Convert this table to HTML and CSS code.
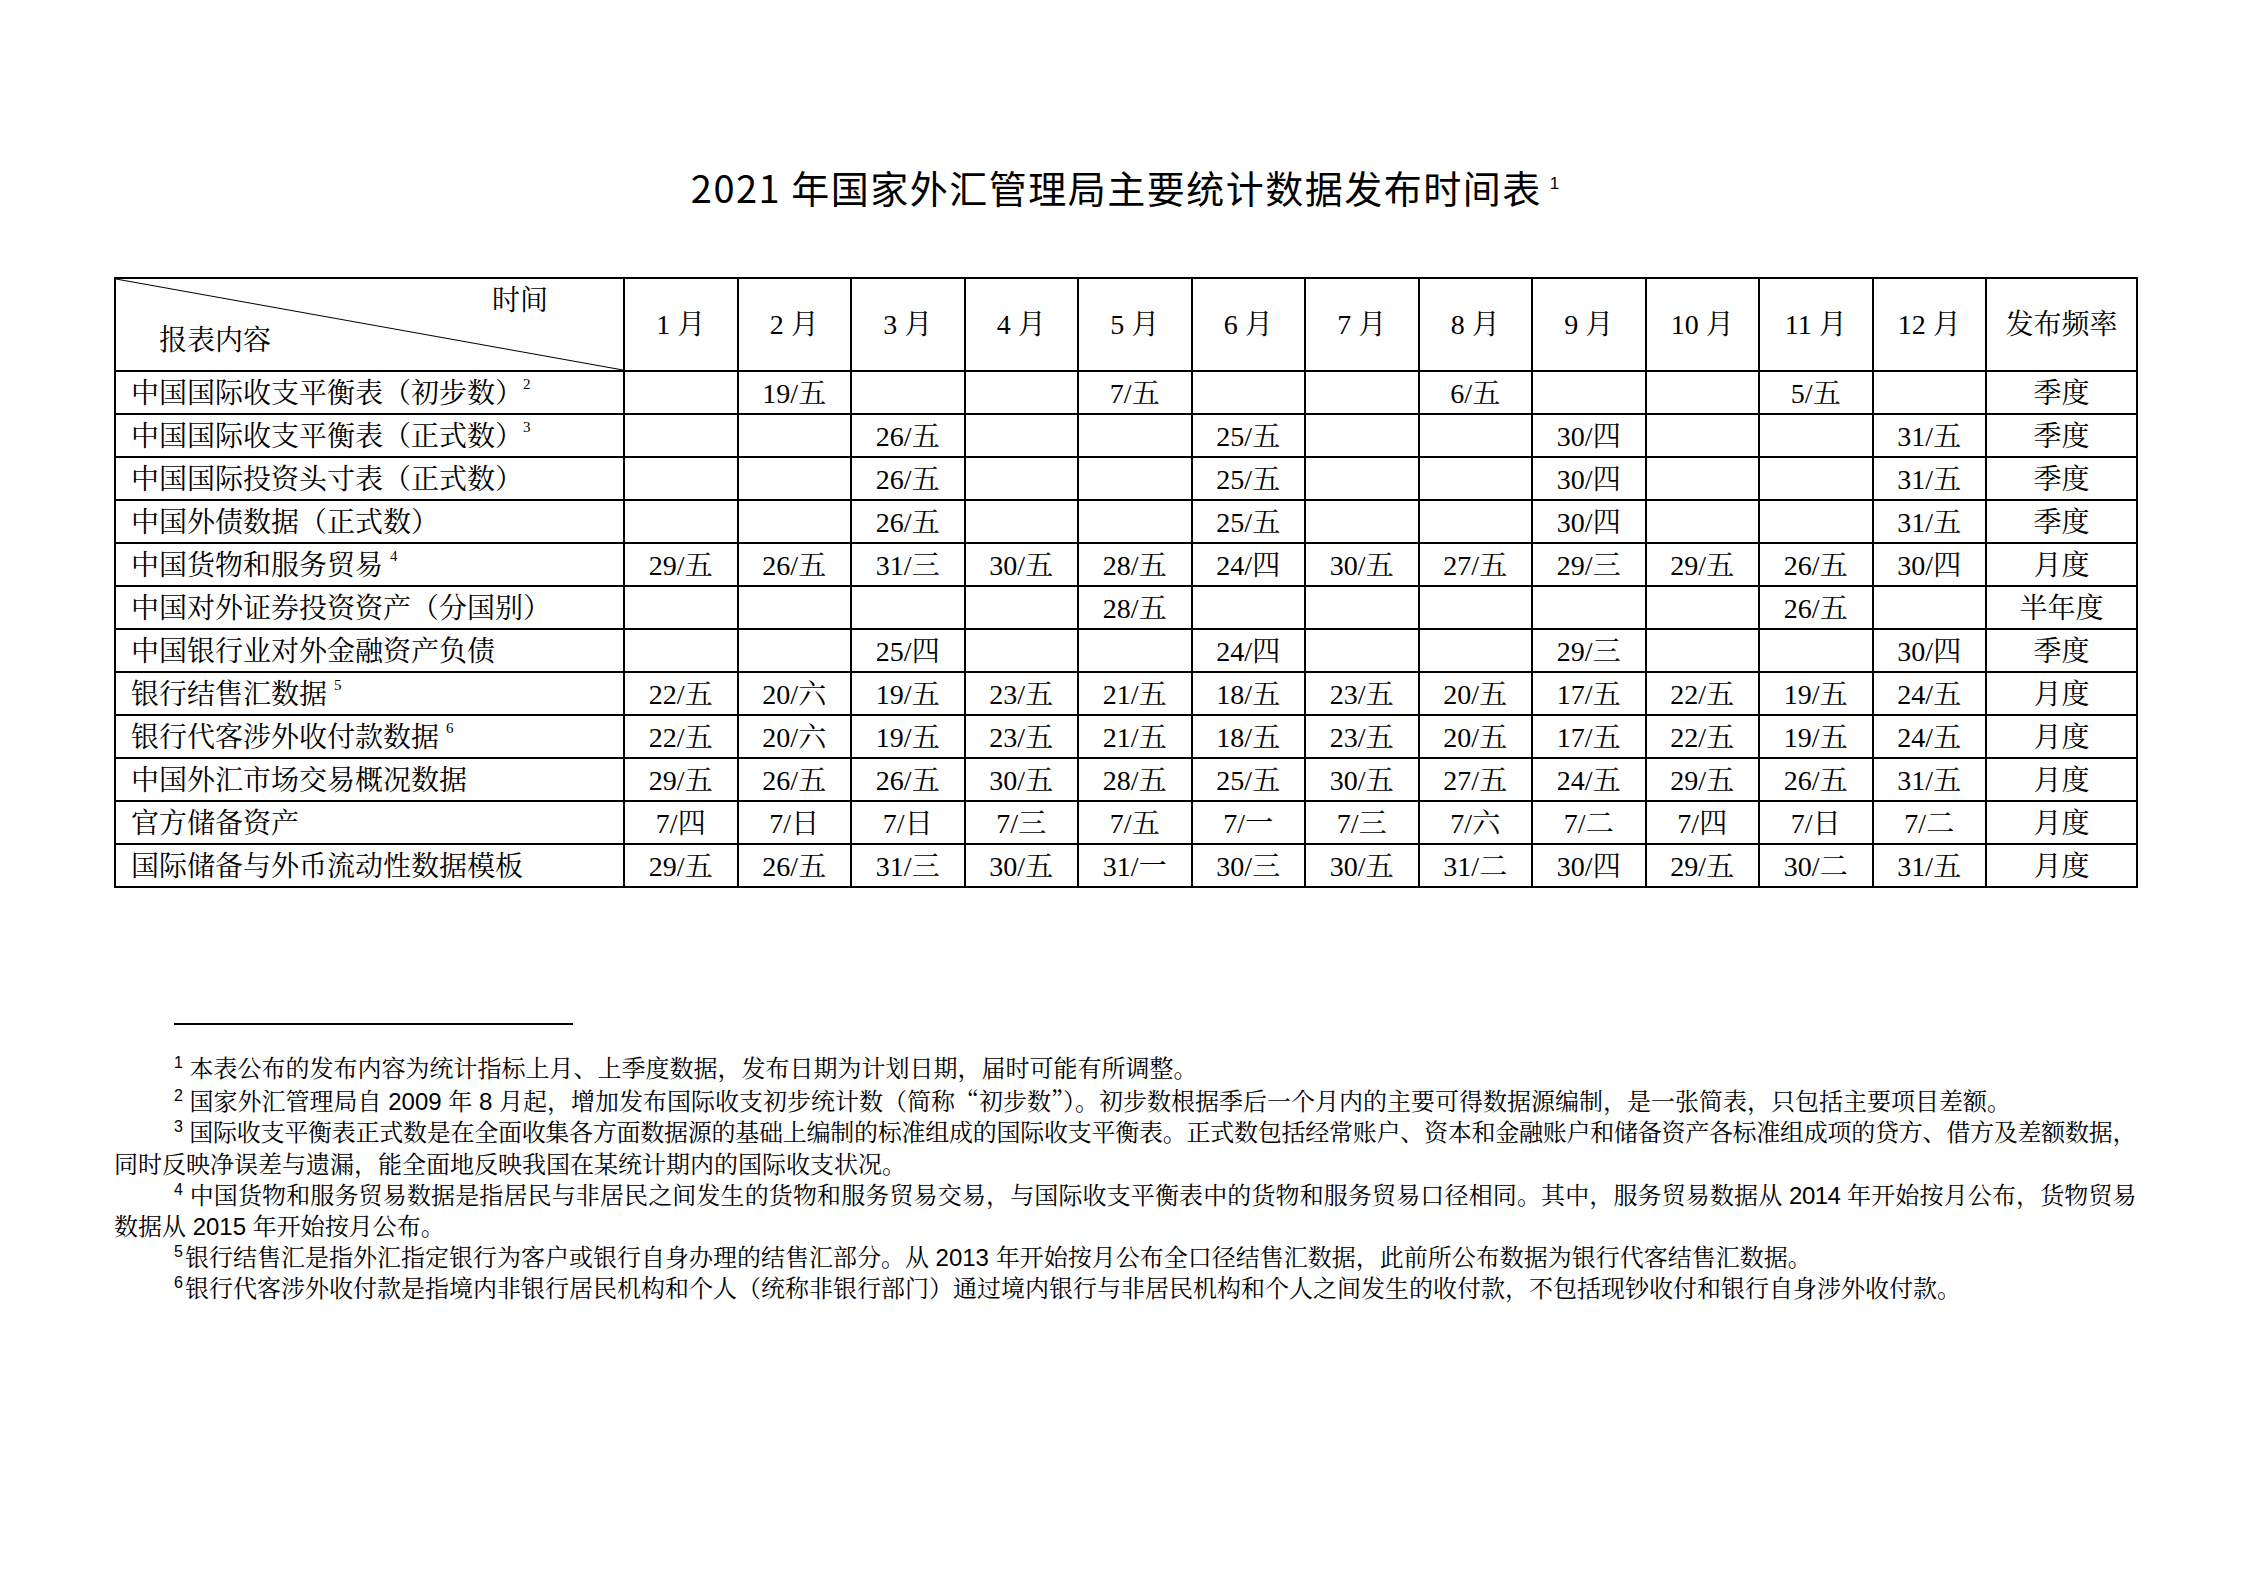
FILE: index.html
```html
<!DOCTYPE html>
<html lang="zh-CN">
<head>
<meta charset="utf-8">
<title>2021 年国家外汇管理局主要统计数据发布时间表</title>
<link rel="stylesheet" href="styles.css">
</head>
<body>
<div class="page">
  <h1 class="title">2021 年国家外汇管理局主要统计数据发布时间表<sup class="title-note">1</sup></h1>

  <table class="schedule">
    <colgroup>
      <col class="c-label">
      <col class="c-month"><col class="c-month"><col class="c-month"><col class="c-month">
      <col class="c-month"><col class="c-month"><col class="c-month"><col class="c-month">
      <col class="c-month"><col class="c-month"><col class="c-month"><col class="c-month">
      <col class="c-freq">
    </colgroup>
    <thead>
      <tr>
        <th class="corner">
          <div class="corner-box">
            <span class="corner-time">时间</span>
            <span class="corner-content">报表内容</span>
          </div>
        </th>
        <th>1 月</th><th>2 月</th><th>3 月</th><th>4 月</th><th>5 月</th><th>6 月</th>
        <th>7 月</th><th>8 月</th><th>9 月</th><th>10 月</th><th>11 月</th><th>12 月</th>
        <th>发布频率</th>
      </tr>
    </thead>
    <tbody>
      <tr>
        <td class="label">中国国际收支平衡表（初步数）<sup>2</sup></td>
        <td></td><td>19/五</td><td></td><td></td><td>7/五</td><td></td><td></td><td>6/五</td><td></td><td></td><td>5/五</td><td></td>
        <td>季度</td>
      </tr>
      <tr>
        <td class="label">中国国际收支平衡表（正式数）<sup>3</sup></td>
        <td></td><td></td><td>26/五</td><td></td><td></td><td>25/五</td><td></td><td></td><td>30/四</td><td></td><td></td><td>31/五</td>
        <td>季度</td>
      </tr>
      <tr>
        <td class="label">中国国际投资头寸表（正式数）</td>
        <td></td><td></td><td>26/五</td><td></td><td></td><td>25/五</td><td></td><td></td><td>30/四</td><td></td><td></td><td>31/五</td>
        <td>季度</td>
      </tr>
      <tr>
        <td class="label">中国外债数据（正式数）</td>
        <td></td><td></td><td>26/五</td><td></td><td></td><td>25/五</td><td></td><td></td><td>30/四</td><td></td><td></td><td>31/五</td>
        <td>季度</td>
      </tr>
      <tr>
        <td class="label">中国货物和服务贸易 <sup>4</sup></td>
        <td>29/五</td><td>26/五</td><td>31/三</td><td>30/五</td><td>28/五</td><td>24/四</td><td>30/五</td><td>27/五</td><td>29/三</td><td>29/五</td><td>26/五</td><td>30/四</td>
        <td>月度</td>
      </tr>
      <tr>
        <td class="label">中国对外证券投资资产（分国别）</td>
        <td></td><td></td><td></td><td></td><td>28/五</td><td></td><td></td><td></td><td></td><td></td><td>26/五</td><td></td>
        <td>半年度</td>
      </tr>
      <tr>
        <td class="label">中国银行业对外金融资产负债</td>
        <td></td><td></td><td>25/四</td><td></td><td></td><td>24/四</td><td></td><td></td><td>29/三</td><td></td><td></td><td>30/四</td>
        <td>季度</td>
      </tr>
      <tr>
        <td class="label">银行结售汇数据 <sup>5</sup></td>
        <td>22/五</td><td>20/六</td><td>19/五</td><td>23/五</td><td>21/五</td><td>18/五</td><td>23/五</td><td>20/五</td><td>17/五</td><td>22/五</td><td>19/五</td><td>24/五</td>
        <td>月度</td>
      </tr>
      <tr>
        <td class="label">银行代客涉外收付款数据 <sup>6</sup></td>
        <td>22/五</td><td>20/六</td><td>19/五</td><td>23/五</td><td>21/五</td><td>18/五</td><td>23/五</td><td>20/五</td><td>17/五</td><td>22/五</td><td>19/五</td><td>24/五</td>
        <td>月度</td>
      </tr>
      <tr>
        <td class="label">中国外汇市场交易概况数据</td>
        <td>29/五</td><td>26/五</td><td>26/五</td><td>30/五</td><td>28/五</td><td>25/五</td><td>30/五</td><td>27/五</td><td>24/五</td><td>29/五</td><td>26/五</td><td>31/五</td>
        <td>月度</td>
      </tr>
      <tr>
        <td class="label">官方储备资产</td>
        <td>7/四</td><td>7/日</td><td>7/日</td><td>7/三</td><td>7/五</td><td>7/一</td><td>7/三</td><td>7/六</td><td>7/二</td><td>7/四</td><td>7/日</td><td>7/二</td>
        <td>月度</td>
      </tr>
      <tr>
        <td class="label">国际储备与外币流动性数据模板</td>
        <td>29/五</td><td>26/五</td><td>31/三</td><td>30/五</td><td>31/一</td><td>30/三</td><td>30/五</td><td>31/二</td><td>30/四</td><td>29/五</td><td>30/二</td><td>31/五</td>
        <td>月度</td>
      </tr>
    </tbody>
  </table>

  <div class="notes">
    <div class="rule"></div>
    <div class="fn-line lead"><sup>1</sup> 本表公布的发布内容为统计指标上月、上季度数据，发布日期为计划日期，届时可能有所调整。</div>
    <div class="fn-line lead"><sup>2</sup> 国家外汇管理局自 2009 年 8 月起，增加发布国际收支初步统计数（简称<span class="cjk">“</span>初步数<span class="cjk">”</span>）。初步数根据季后一个月内的主要可得数据源编制，是一张简表，只包括主要项目差额。</div>
    <div class="fn-line lead fill"><sup>3</sup><span class="thin"></span>国际收支平衡表正式数是在全面收集各方面数据源的基础上编制的标准组成的国际收支平衡表。正式数包括经常账户、资本和金融账户和储备资产各标准组成项的贷方、借方及差额数据，</div>
    <div class="fn-line">同时反映净误差与遗漏，能全面地反映我国在某统计期内的国际收支状况。</div>
    <div class="fn-line lead fill"><sup>4</sup> 中国货物和服务贸易数据是指居民与非居民之间发生的货物和服务贸易交易，与国际收支平衡表中的货物和服务贸易口径相同。其中，服务贸易数据从 2014 年开始按月公布，货物贸易</div>
    <div class="fn-line">数据从 2015 年开始按月公布。</div>
    <div class="fn-line lead"><sup>5</sup><span class="hair"></span>银行结售汇是指外汇指定银行为客户或银行自身办理的结售汇部分。从 2013 年开始按月公布全口径结售汇数据，此前所公布数据为银行代客结售汇数据。</div>
    <div class="fn-line lead"><sup>6</sup><span class="hair"></span>银行代客涉外收付款是指境内非银行居民机构和个人（统称非银行部门）通过境内银行与非居民机构和个人之间发生的收付款，不包括现钞收付和银行自身涉外收付款。</div>
  </div>
</div>
</body>
</html>
```

FILE: styles.css
```css
html, body {
  margin: 0;
  padding: 0;
  background: #fff;
  color: #000;
}

.page {
  width: 2022px;
  padding: 164px 109px 0 114px;
}

.title {
  margin: 0;
  height: 46px;
  line-height: 46px;
  text-align: center;
  font-family: "Noto Sans CJK SC", "Liberation Sans", sans-serif;
  font-size: 38px;
  font-weight: 400;
  letter-spacing: 1.5px;
  color: #000;
}

.title-note {
  font-family: "Liberation Sans", sans-serif;
  font-size: 17px;
  line-height: 0;
  vertical-align: 14px;
  margin-left: 8px;
  letter-spacing: 0;
}

/* ---------- schedule table ---------- */
.schedule {
  margin-top: 67px;
  width: 2022px;
  border-collapse: collapse;
  table-layout: fixed;
  font-family: "Liberation Serif", "Noto Serif CJK SC", "Source Han Serif SC", "Noto Sans CJK SC", serif;
  font-size: 28px;
  color: #000;
}

.c-label { width: 509px; }
.c-month { width: 113.5px; }
.c-freq { width: 151px; }

.schedule th,
.schedule td {
  border: 2px solid #000;
  padding: 0;
  text-align: center;
  vertical-align: middle;
  white-space: nowrap;
  font-weight: 400;
  line-height: 30px;
}

.schedule tbody td {
  padding-top: 2px;
}

.schedule thead tr { height: 91px; }
.schedule tbody tr { height: 43px; }

.schedule td.label {
  text-align: left;
  padding-left: 15px;
}

.schedule sup {
  font-size: 15px;
  line-height: 0;
  vertical-align: 14px;
}

/* diagonal header cell */
.schedule th.corner {
  vertical-align: top;
  background: linear-gradient(to top right,
    transparent calc(50% - 1px),
    #000 50%,
    transparent calc(50% + 1px));
}

.corner-box {
  display: flex;
  flex-direction: column;
  padding: 2px 0 9px 0;
}

.corner-time {
  align-self: flex-end;
  padding-right: 75px;
  line-height: 40px;
}

.corner-content {
  align-self: flex-start;
  padding-left: 43px;
  line-height: 40px;
}

/* ---------- footnotes ---------- */
.notes {
  margin-top: 135px;
  font-family: "Liberation Sans", "Noto Serif CJK SC", "Source Han Serif SC", "Noto Sans CJK SC", sans-serif;
  font-size: 24px;
  line-height: 31.2px;
  color: #000;
}

.rule {
  width: 399px;
  height: 2px;
  background: #000;
  margin-left: 60px;
  margin-bottom: 28px;
}

.fn-line {
  text-align: left;
  white-space: nowrap;
}

.fn-line.lead {
  text-indent: 60px;
}

.fn-line.fill {
  text-align: justify;
  text-align-last: justify;
  letter-spacing: -0.55px;
}

.fn-line sup {
  font-size: 16px;
  line-height: 0;
  vertical-align: 9px;
  letter-spacing: 0;
}

.cjk {
  font-family: "Noto Serif CJK SC", "Noto Sans CJK SC", serif;
}

.thin {
  display: inline-block;
  width: 6px;
}

.hair {
  display: inline-block;
  width: 2px;
}
```
